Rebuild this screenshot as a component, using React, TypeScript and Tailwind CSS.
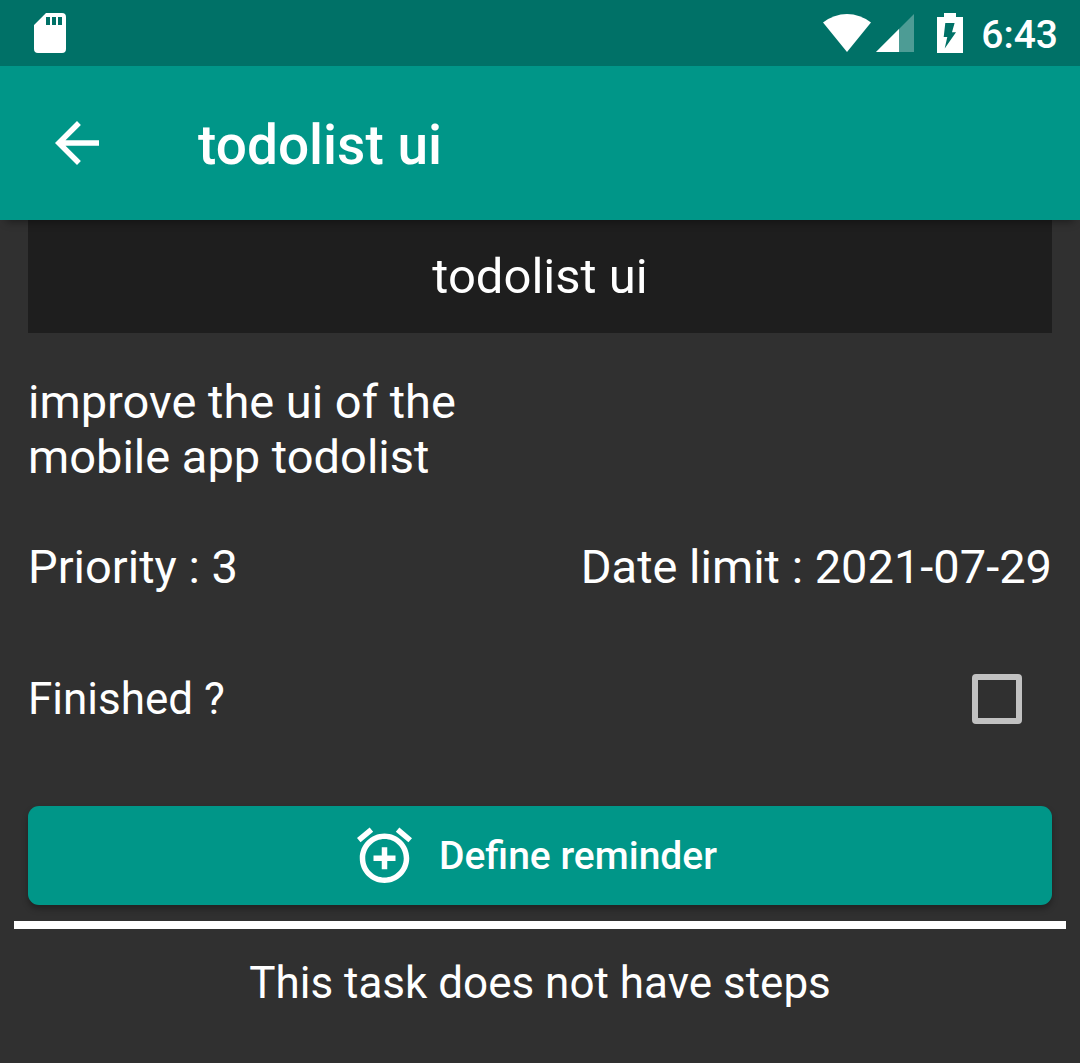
import React from "react";

export default function App() {
  return (
    <div className="min-h-screen w-full bg-[#303030] font-['Roboto',sans-serif] text-white">
      <div className="flex h-[66px] items-center justify-between bg-[#007167] pr-[22px] pl-[34px]">
        <svg className="h-10 w-8" viewBox="0 0 32 40" aria-hidden="true">
          <path
            fill="#fff"
            fillRule="evenodd"
            d="M12 0H28a4 4 0 0 1 4 4V36a4 4 0 0 1-4 4H4a4 4 0 0 1-4-4V12ZM12 4v8h4V4ZM18 4v8h4V4ZM24 4v8h4V4Z"
          />
        </svg>
        <div className="flex items-center">
          <svg className="h-[38px] w-12" viewBox="0 0 48 38" aria-hidden="true">
            <path fill="#fff" d="M0 8.5Q11 0 24 0T48 8.5L24 38Z" />
          </svg>
          <svg className="ml-[5px] h-[38px] w-[38px]" viewBox="0 0 38 38" aria-hidden="true">
            <path fill="#fff" fillOpacity=".3" d="M38 0V38H0Z" />
            <path fill="#fff" d="M23 15V38H0Z" />
          </svg>
          <svg className="ml-[23px] h-10 w-[26px]" viewBox="0 0 26 40" aria-hidden="true">
            <path fill="#fff" d="M7 0h12v4h7v36H0V4h7Z" />
            <path fill="#007167" d="M8.3 10h9.3L15 19.3h4L7.7 35.6 10.3 24H6.7Z" />
          </svg>
          <span className="ml-[18px] pt-1 text-[39px] leading-[62px] font-medium">6:43</span>
        </div>
      </div>

      <header className="relative flex h-[154px] items-center bg-[#009688] pl-[55px] shadow-[0_8px_8px_-6px_rgba(0,0,0,0.4)]">
        <button type="button" aria-label="Back" className="h-11 w-11">
          <svg className="h-11 w-11" viewBox="4 4 16 16" aria-hidden="true">
            <path fill="#fff" d="M20 11H7.83l5.59-5.59L12 4l-8 8 8 8 1.41-1.41L7.83 13H20v-2z" />
          </svg>
        </button>
        <h1 className="ml-[99px] pt-1 text-[55px] leading-[64px] font-medium">todolist ui</h1>
      </header>

      <main>
        <div className="px-7">
          <h2 className="h-[113px] bg-[#1e1e1e] text-center text-[49px] leading-[113px]">todolist ui</h2>
          <p className="mt-[41px] w-1/2 text-[47px] leading-[55px]">improve the ui of the mobile app todolist</p>
          <div className="mt-[55px] flex justify-between text-[47px] leading-[55px]">
            <span>Priority : 3</span>
            <span>Date limit : 2021-07-29</span>
          </div>
          <div className="mt-[76px] flex items-center justify-between pr-[30px]">
            <label htmlFor="finished" className="pt-0.5 text-[44px] leading-[55px]">Finished ?</label>
            <input
              id="finished"
              type="checkbox"
              className="h-[50px] w-[50px] appearance-none rounded-[4px] border-[6px] border-[#c1c1c1] checked:bg-[#009688]"
            />
          </div>
          <button
            type="button"
            className="mt-[79px] flex h-[99px] w-full items-center justify-center rounded-[11px] bg-[#009688] pr-1.5 pb-0.5 text-[39px] font-medium shadow-[0_4px_6px_rgba(0,0,0,0.3)]"
          >
            <svg className="mr-[27px] h-[56px] w-[55px]" viewBox="2 1.7 20 20.3" aria-hidden="true">
              <path
                fill="#fff"
                d="M7.88 3.39 6.6 1.86 2 5.71l1.29 1.53 4.59-3.85zM22 5.72l-4.6-3.86-1.29 1.53 4.6 3.86L22 5.72zM12 4c-4.97 0-9 4.03-9 9s4.02 9 9 9c4.97 0 9-4.03 9-9s-4.03-9-9-9zm0 16c-3.87 0-7-3.13-7-7s3.13-7 7-7 7 3.13 7 7-3.13 7-7 7zm1-11h-2v3H8v2h3v3h2v-3h3v-2h-3V9z"
              />
            </svg>
            <span className="pt-1">Define reminder</span>
          </button>
        </div>
        <hr className="mx-3.5 mt-4 h-2 border-0 bg-white" />
        <p className="mt-[27px] text-center text-[44px] leading-[55px]">This task does not have steps</p>
      </main>
    </div>
  );
}
